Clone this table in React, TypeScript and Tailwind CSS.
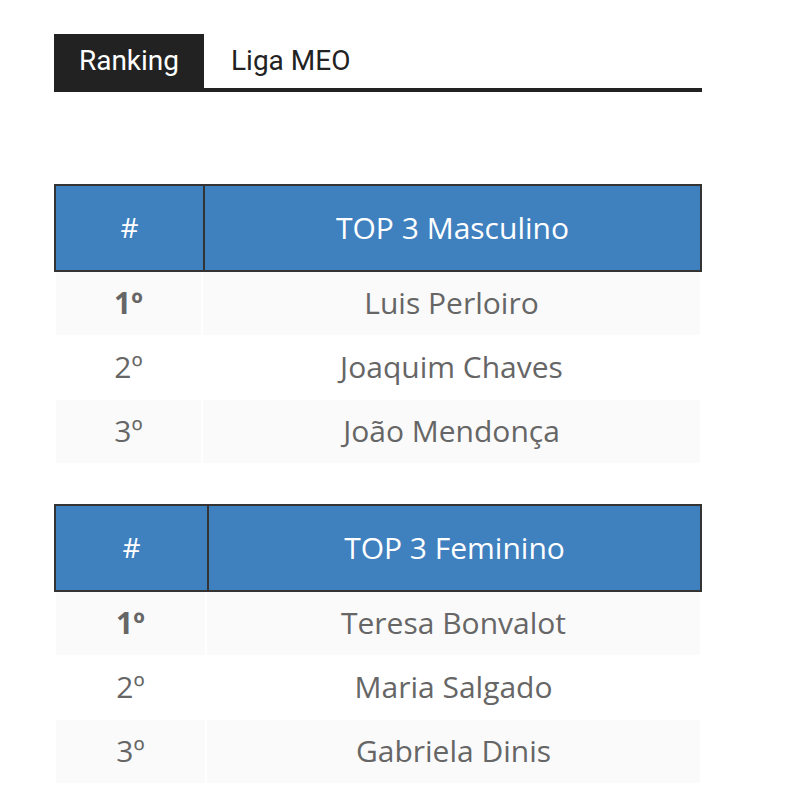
import React from "react";

type Row = { pos: string; name: string; bold?: boolean };

function RankTable({ title, rows, firstCol }: { title: string; rows: Row[]; firstCol: "a" | "b" }) {
  const colW = firstCol === "a" ? "w-[149px]" : "w-[153px]";
  return (
    <div className="w-[648px]" style={{ fontFamily: '"Open Sans", sans-serif' }}>
      <div className="flex h-[88px] border-2 border-[#333] bg-[#3f80bf] text-white">
        <div className={`${colW} shrink-0 border-r-2 border-[#333] flex items-center justify-center text-[28px] pb-[2px]`}>#</div>
        <div className="flex-1 flex items-center justify-center text-[30px] pb-[2px]">{title}</div>
      </div>
      {rows.map((r, i) => (
        <div key={i} className="flex h-[64px] px-[2px] pb-[1px] text-[#666] text-[30px]">
          <div
            className={`${firstCol === "a" ? "w-[145px]" : "w-[149px]"} shrink-0 flex items-center justify-center mr-[2px] pb-[2px] ${
              i % 2 === 0 ? "bg-[#fafafa]" : "bg-white"
            } ${r.bold ? "font-bold" : ""}`}
          >
            {r.pos}
          </div>
          <div className={`flex-1 flex items-center justify-center pb-[2px] ${i % 2 === 0 ? "bg-[#fafafa]" : "bg-white"}`}>{r.name}</div>
        </div>
      ))}
    </div>
  );
}

export default function App() {
  return (
    <div className="min-h-[788px] bg-white pl-[54px] pt-[34px]">
      <div className="w-[648px] flex border-b-4 border-[#222]" style={{ fontFamily: 'Roboto, sans-serif' }}>
        <div className="w-[150px] h-[54px] bg-[#222] text-white flex items-center justify-center text-[28px]">Ranking</div>
        <div className="h-[54px] flex items-center pl-[27px] text-[#222] text-[28px]">Liga MEO</div>
      </div>
      <div className="mt-[92px]">
        <RankTable
          title="TOP 3 Masculino"
          firstCol="a"
          rows={[
            { pos: "1º", name: "Luis Perloiro", bold: true },
            { pos: "2º", name: "Joaquim Chaves" },
            { pos: "3º", name: "João Mendonça" },
          ]}
        />
      </div>
      <div className="mt-[40px]">
        <RankTable
          title="TOP 3 Feminino"
          firstCol="b"
          rows={[
            { pos: "1º", name: "Teresa Bonvalot", bold: true },
            { pos: "2º", name: "Maria Salgado" },
            { pos: "3º", name: "Gabriela Dinis" },
          ]}
        />
      </div>
    </div>
  );
}
